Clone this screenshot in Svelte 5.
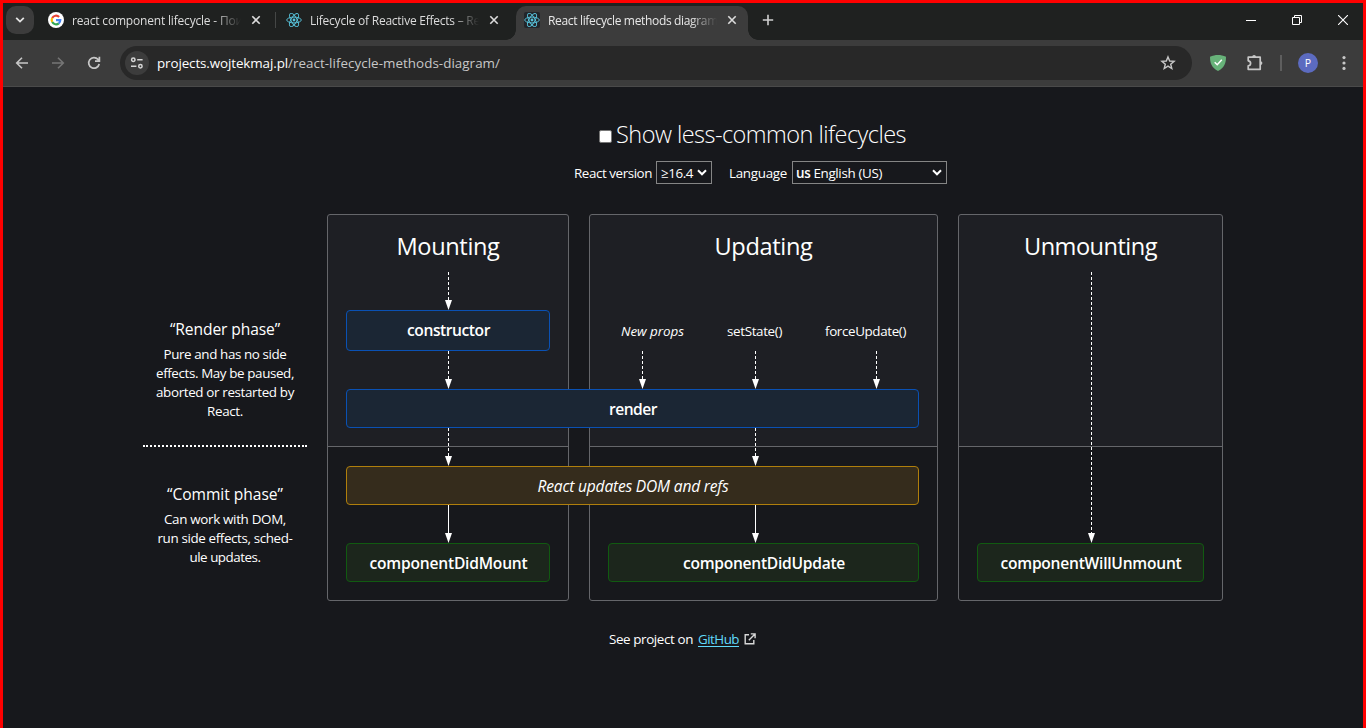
<script>
  // Spreads the letters of a line so that it takes the given width.
  function fit(node, width) {
    const natural = node.getBoundingClientRect().width;
    const count = [...node.textContent].length;
    node.style.letterSpacing = (width - natural) / count + 'px';
  }

  const tabs = [
    { icon: 'google', title: 'react component lifecycle - Пои', width: 171, active: false },
    { icon: 'react', title: 'Lifecycle of Reactive Effects – Re', width: 170, active: false },
    { icon: 'react', title: 'React lifecycle methods diagram', width: 170, active: true }
  ];

  const phases = [
    {
      name: '“Render phase”',
      width: 110,
      lines: [['Pure and has no side', 123], ['effects. May be paused,', 138], ['aborted or restarted by', 138], ['React.', 36]]
    },
    {
      name: '“Commit phase”',
      width: 116,
      lines: [['Can work with DOM,', 122], ['run side effects, sched-', 135], ['ule updates.', 71]]
    }
  ];
</script>

{#snippet reactLogo()}
  <svg width="16" height="16" viewBox="0 0 16 16" fill="none" stroke="#58c4dc" stroke-width=".9">
    <ellipse cx="8" cy="8" rx="7.3" ry="2.9" />
    <ellipse cx="8" cy="8" rx="7.3" ry="2.9" transform="rotate(60 8 8)" />
    <ellipse cx="8" cy="8" rx="7.3" ry="2.9" transform="rotate(120 8 8)" />
    <circle cx="8" cy="8" r="1.4" fill="#58c4dc" stroke="none" />
  </svg>
{/snippet}

{#snippet googleLogo()}
  <svg width="16" height="16" viewBox="0 0 16 16" fill="none" stroke-width="2.2">
    <circle cx="8" cy="8" r="8" fill="#fff" />
    <path d="M11.1 5A4.3 4.3 0 0 0 4.2 6" stroke="#ea4335" />
    <path d="M4.2 6A4.3 4.3 0 0 0 4.2 10" stroke="#fbbc05" />
    <path d="M4.2 10A4.3 4.3 0 0 0 10.8 11.3" stroke="#34a853" />
    <path d="M10.8 11.3A4.3 4.3 0 0 0 12.3 8.1H8" stroke="#4285f4" />
  </svg>
{/snippet}

{#snippet cross()}
  <svg class="cross" width="16" height="16" viewBox="0 0 16 16" stroke="#dcdcdc" stroke-width="1.6">
    <path d="M4.3 4.3l7.4 7.4M11.7 4.3l-7.4 7.4" />
  </svg>
{/snippet}

{#snippet arrow(height, cls, dashed)}
  <svg class="arrow {cls}" width="7" {height} viewBox="0 0 7 {height}">
    <path d="M3.5 {height > 38 ? 1 : 0}V{height - 9}" stroke="#fff" stroke-dasharray={dashed ? '3 2' : 'none'} />
    <path d="M0 {height - 10}H7L3.5 {height}Z" fill="#fff" />
  </svg>
{/snippet}

{#snippet chevron()}
  <svg width="10" height="8" viewBox="0 0 10 8" fill="none" stroke="#fff" stroke-width="2">
    <path d="M1 1.3L5 5.3L9 1.3" />
  </svg>
{/snippet}

<div class="window">
  <header class="strip">
    <button class="search" aria-label="Search tabs">
      <svg width="10" height="8" viewBox="0 0 10 8" fill="none" stroke="#e3e3e3" stroke-width="1.8"><path d="M1.2 1.8L5 5.6L8.8 1.8" /></svg>
    </button>
    {#each tabs as tab}
      <div class="tab" class:active={tab.active}>
        <span class="favicon">
          {#if tab.icon === 'google'}{@render googleLogo()}{:else}{@render reactLogo()}{/if}
        </span>
        <span class="title"><span use:fit={tab.width}>{tab.title}</span></span>
        {@render cross()}
      </div>
    {/each}
    <svg class="plus" width="12" height="12" viewBox="0 0 12 12" stroke="#d0d0d0" stroke-width="1.6"><path d="M6 .8V11.2M.8 6H11.2" /></svg>
    <div class="controls">
      <svg width="10" height="10" viewBox="0 0 10 10" stroke="#fff"><path d="M0 5.5H10" /></svg>
      <svg width="10" height="10" viewBox="0 0 10 10" fill="none" stroke="#fff"><path d="M.5 2.5H7.5V9.5H.5ZM2.5 2.5V.5H9.5V7.5H7.5" /></svg>
      <svg width="10" height="10" viewBox="0 0 10 10" stroke="#fff" stroke-width="1.1"><path d="M0 0L10 10M10 0L0 10" /></svg>
    </div>
  </header>

  <nav class="toolbar">
    <svg width="14" height="14" viewBox="0 0 14 14" fill="none" stroke="#c7c7c7" stroke-width="1.6"><path d="M13 7H2M7 1.7L1.7 7L7 12.3" /></svg>
    <svg class="next" width="14" height="14" viewBox="0 0 14 14" fill="none" stroke="#757575" stroke-width="1.6"><path d="M1 7H12M7 1.7L12.3 7L7 12.3" /></svg>
    <svg class="reload" width="14" height="14" viewBox="0 0 14 14" fill="none" stroke="#c7c7c7" stroke-width="1.7"><path d="M12.2 8A5.3 5.3 0 1 1 11 3.4L12.3 4.8M12.4 .8V5.2H8" /></svg>
    <div class="address">
      <span class="site">
        <svg width="14" height="14" viewBox="0 0 14 14" fill="none" stroke="#d6d6d6" stroke-width="1.5">
          <circle cx="3.3" cy="3.7" r="1.7" /><path d="M7.2 3.7H12.6M1 10.3H6.4" /><circle cx="10.4" cy="10.3" r="1.7" />
        </svg>
      </span>
      <span class="url"><span class="host" use:fit={131}>projects.wojtekmaj.pl</span><span use:fit={212}>/react-lifecycle-methods-diagram/</span></span>
      <svg class="star" width="16" height="16" viewBox="0 0 16 16" fill="none" stroke="#c7c7c7" stroke-width="1.4"><path d="M8 1.9L9.7 6L14.1 6.3L10.7 9.2L11.8 13.6L8 11.2L4.2 13.6L5.3 9.2L1.9 6.3L6.3 6Z" /></svg>
    </div>
    <svg class="shield" width="16" height="16" viewBox="0 0 16 16">
      <path d="M8 0C10.6 0 13.4 .6 16 1.7C16 8 14.4 12.6 8 16C1.6 12.6 0 8 0 1.7C2.6 .6 5.4 0 8 0Z" fill="#67b279" />
      <path d="M4.7 7.2L7.2 9.7L11.8 4.8" fill="none" stroke="#fff" stroke-width="1.5" />
    </svg>
    <svg class="puzzle" width="18" height="18" viewBox="0 0 18 18" fill="none" stroke="#c7c7c7" stroke-width="1.7">
      <path d="M2.2 3.2H14.2V15.3H2.2V11.8C5.4 11.6 5.4 7.1 2.2 6.8Z" stroke-linejoin="round" />
      <path d="M6.2 2.9A1.9 1.9 0 0 1 10 2.9ZM14.5 7.2A1.9 1.9 0 0 1 14.5 11Z" fill="#c7c7c7" stroke="none" />
    </svg>
    <span class="divider"></span>
    <span class="avatar">P</span>
    <svg class="menu" width="4" height="16" viewBox="0 0 4 16" fill="#c7c7c7"><circle cx="2" cy="2.6" r="1.6" /><circle cx="2" cy="8" r="1.6" /><circle cx="2" cy="13.4" r="1.6" /></svg>
  </nav>

  <main>
    <div class="toggle">
      <span class="box"></span>
      <span class="heading" use:fit={290}>Show less-common lifecycles</span>
    </div>
    <div class="options">
      <span use:fit={78}>React version</span>
      <div class="select version"><span use:fit={32}>≥16.4</span>{@render chevron()}</div>
      <span class="language" use:fit={58}>Language</span>
      <div class="select locale"><span use:fit={86}><b>us</b> English (US)</span>{@render chevron()}</div>
    </div>

    <div class="diagram">
      {#each phases as phase, i}
        <section class="phase p{i}">
          <h4><span use:fit={phase.width}>{phase.name}</span></h4>
          {#each phase.lines as [text, width]}
            <p><span use:fit={width}>{text}</span></p>
          {/each}
        </section>
      {/each}

      <div class="panel mount"></div>
      <div class="panel update"></div>
      <div class="panel unmount"></div>

      <h3 class="mount"><span use:fit={103}>Mounting</span></h3>
      <h3 class="update"><span use:fit={98}>Updating</span></h3>
      <h3 class="unmount"><span use:fit={133}>Unmounting</span></h3>

      {@render arrow(39, 'mount r2', true)}
      <div class="node blue mount r3"><span use:fit={83}>constructor</span></div>
      {@render arrow(38, 'mount r4', true)}

      <div class="triggers update r3">
        <i use:fit={63}>New props</i>
        <span use:fit={55}>setState()</span>
        <span use:fit={81}>forceUpdate()</span>
      </div>
      <div class="feeds update r4">
        {@render arrow(38, '', true)}
        {@render arrow(38, '', true)}
        {@render arrow(38, '', true)}
      </div>

      <div class="node blue wide r5"><span use:fit={48}>render</span></div>
      {@render arrow(38, 'mount r6', true)}
      {@render arrow(38, 'update r6', true)}
      <div class="node amber wide r7"><span use:fit={191}>React updates DOM and refs</span></div>
      {@render arrow(38, 'mount r8', false)}
      {@render arrow(38, 'update r8', false)}
      {@render arrow(272, 'unmount long', true)}
      <div class="node green mount r9"><span use:fit={158}>componentDidMount</span></div>
      <div class="node green update r9"><span use:fit={162}>componentDidUpdate</span></div>
      <div class="node green unmount r9"><span use:fit={181}>componentWillUnmount</span></div>
    </div>

    <footer>
      <span use:fit={84}>See project on</span>
      <a href="#github"><span use:fit={41}>GitHub</span></a>
      <svg width="12" height="12" viewBox="0 0 12 12" fill="none" stroke="#d8d8d8" stroke-width="1.4"><path d="M5 1.7H1.2V10.8H9.8V7M6.8 .9H11.1V5.2M11 1L4.8 7.2" /></svg>
    </footer>
  </main>
</div>

<style>
  :global(body) { margin: 0; overflow: hidden; background: #17181c; }
  .window {
    box-sizing: border-box; width: 1366px; height: 728px; overflow: hidden;
    border: 3px solid #f00; border-bottom: 0; background: #17181c; color: #fff;
    font-family: "Open Sans", "Noto Sans", sans-serif; font-size: 13.4px; white-space: nowrap;
  }
  svg { display: block; flex: none; }
  span, i { white-space: pre; }

  .strip { display: flex; height: 37px; background: #1f2120; align-items: flex-start; }
  .search { display: grid; place-items: center; width: 28px; height: 28px; margin: 3px 6px 0 3px; padding: 0; border: 0; border-radius: 10px; background: #3c3c3c; }
  .tab { box-sizing: border-box; position: relative; display: flex; align-items: center; height: 34px; margin-top: 3px; padding: 0 8px 6px; width: 232px; font-size: 12px; color: #dcdcdc; }
  .tab + .tab { margin-left: 6px; }
  .tab:nth-of-type(1)::after { content: ""; position: absolute; right: -4px; top: 6px; width: 1px; height: 16px; background: #454746; }
  .favicon { display: block; width: 16px; height: 16px; }
  .title { width: 172px; margin: 0 4px 0 8px; mask-image: linear-gradient(90deg, #000 142px, transparent 169px); }
  .tab.active { border-radius: 10px 10px 0 0; background: #3c3c3c; color: #e8e8e8; }
  .active .favicon { border-radius: 2px; background: #23252a; }
  .active::before, .active::after { content: ""; position: absolute; bottom: 0; width: 10px; height: 10px; }
  .active::before { left: -10px; background: radial-gradient(circle at 0 0, transparent 9.5px, #3c3c3c 10px); }
  .active::after { right: -10px; background: radial-gradient(circle at 100% 0, transparent 9.5px, #3c3c3c 10px); }
  .plus { margin: 11px 0 0 14px; }
  .controls { display: flex; gap: 36px; margin: 12px 15px 0 auto; }

  .toolbar { box-sizing: border-box; display: flex; align-items: center; height: 47px; padding: 0 17px 0 12px; border-bottom: 1px solid #4a4a4a; background: #3c3c3c; }
  .next { margin-left: 22px; }
  .reload { margin: 0 19px 0 22px; }
  .address { box-sizing: border-box; display: flex; align-items: center; width: 1072px; height: 34px; padding: 0 16px 0 5px; border-radius: 17px; background: #282828; font-size: 13.4px; }
  .site { display: grid; place-items: center; width: 24px; height: 24px; margin-right: 8px; border-radius: 50%; background: #3c3c3c; }
  .url { color: #c7c7c7; }
  .host { color: #fff; }
  .star { margin-left: auto; }
  .shield { margin-left: 18px; }
  .puzzle { margin-left: 20px; }
  .divider { width: 2px; height: 16px; margin: 0 17px 0 16px; background: #5e5e5e; }
  .avatar { width: 20px; height: 20px; margin-left: -1px; border-radius: 50%; background: #5c6bc0; font-size: 10.5px; line-height: 20px; text-align: center; }
  .menu { margin-left: auto; }

  main { display: flow-root; }
  .toggle { display: flex; align-items: center; height: 36px; margin: 29px 0 0 596px; }
  .box { box-sizing: border-box; width: 13px; height: 13px; margin: 5px 4px 0 0; border: 1px solid #767676; border-radius: 2px; background: #fff; }
  .heading { font-size: 23.5px; font-weight: 300; }
  .options { display: flex; align-items: center; height: 23px; margin: 9px 0 0 571px; }
  .select { box-sizing: border-box; display: flex; align-items: center; justify-content: space-between; height: 23px; padding: 0 4px 0 4px; border: 1px solid #858585; }
  .version { width: 56px; margin-left: 4px; }
  .language { margin-left: 17px; }
  .locale { width: 155px; margin-left: 5px; padding-left: 3px; }
  b { font-weight: 600; }

  .diagram {
    display: grid; margin: 30px 0 0 140px;
    grid-template-columns: 164px 242px 349px 265px; column-gap: 20px;
    grid-template-rows: 57px 39px 41px 38px 39px 38px 39px 38px 39px 19px;
  }
  .phase { grid-column: 1; text-align: center; }
  .p0 { grid-row: 1 / 7; box-sizing: border-box; height: 233px; padding-top: 105px; border-bottom: 2px dotted #fff; }
  .p1 { grid-row: 6 / 11; padding-top: 56px; }
  h4 { margin: 0 0 5px; font-size: 15.6px; font-weight: 400; line-height: 21px; }
  p { margin: 0; line-height: 19px; }
  .panel { grid-row: 1 / -1; box-sizing: border-box; border: 1px solid #65666a; border-radius: 3px; background: linear-gradient(#1e1f24 231px, #65666a 231px 232px, transparent 232px); }
  .mount { grid-column: 2; }
  .update { grid-column: 3; }
  .unmount { grid-column: 4; }
  .wide { grid-column: 2 / 4; }
  h3 { grid-row: 1; margin: 0; padding-top: 17px; font-size: 23.6px; font-weight: 400; line-height: 31px; text-align: center; }
  .r2 { grid-row: 2; }
  .r3 { grid-row: 3; }
  .r4 { grid-row: 4; }
  .r5 { grid-row: 5; }
  .r6 { grid-row: 6; }
  .r7 { grid-row: 7; }
  .r8 { grid-row: 8; }
  .r9 { grid-row: 9; }
  .arrow.mount { margin-left: 118px; }
  .arrow.update { margin-left: 163px; }
  .arrow.unmount { margin-left: 130px; }
  .long { grid-row: 2 / 9; }
  .node { display: grid; place-items: center; margin: 0 19px; padding-left: 1px; border: 1px solid; border-radius: 4px; font-size: 15.6px; font-weight: 600; }
  .node.r3 { padding-bottom: 2px; }
  .blue { border-color: #0a51b4; background: #1b2634; }
  .amber { border-color: #b07f0c; background: #352c1c; font-style: italic; font-weight: 400; }
  .green { border-color: #115a11; background: #1c261c; }
  .triggers { display: flex; align-items: center; padding-left: 32px; font-size: 13.4px; }
  .triggers span { margin-left: 43px; }
  .feeds { display: flex; padding-left: 50px; }
  .feeds :global(svg + svg) { margin-left: 106px; }
  .feeds :global(svg:last-child) { margin-left: 114px; }

  footer { display: flex; align-items: center; height: 22px; margin: 27px 0 0 606px; }
  a { margin: 0 5px 0 5px; color: #61dafb; text-decoration: underline; text-underline-offset: 2px; }
</style>
